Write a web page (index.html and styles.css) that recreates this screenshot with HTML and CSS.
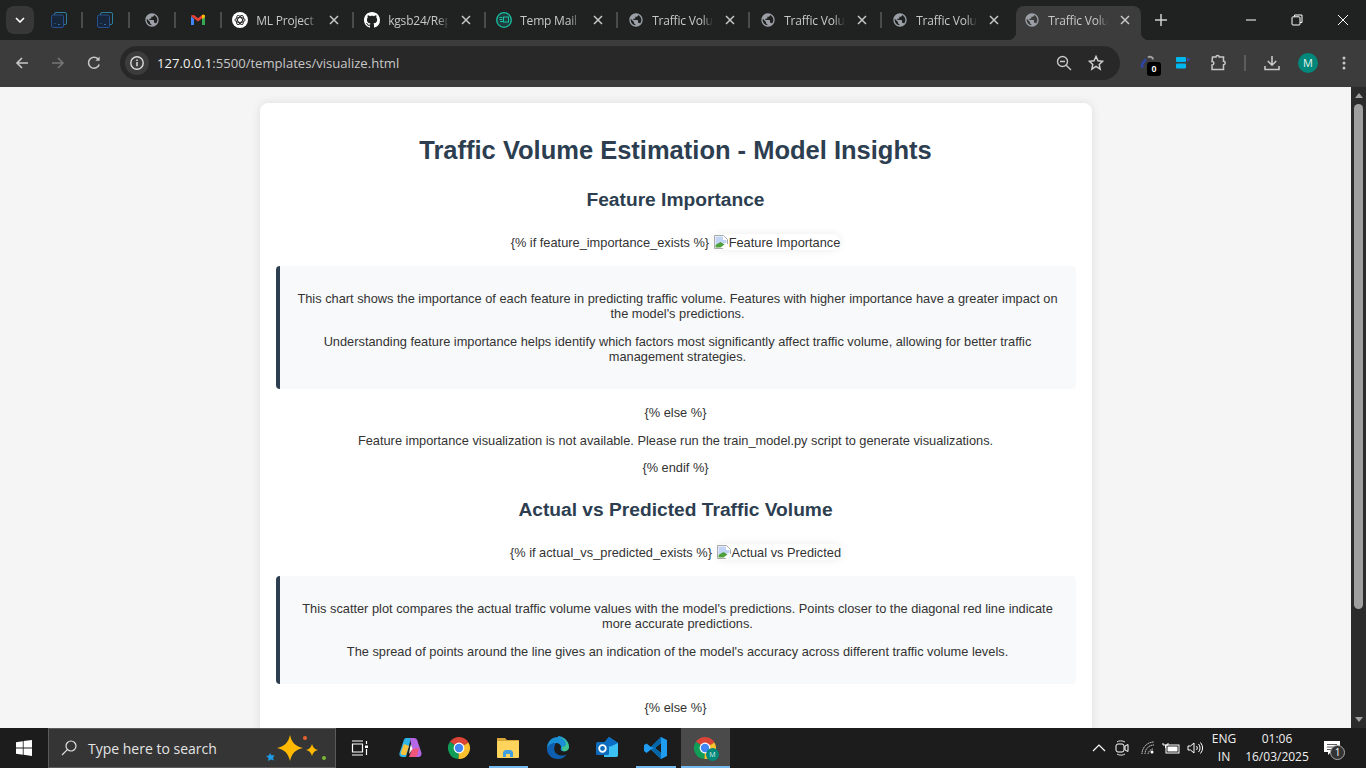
FILE: index.html
```html
<!DOCTYPE html>
<html lang="en">
<head>
  <meta charset="UTF-8" />
  <meta name="viewport" content="width=device-width, initial-scale=1.0" />
  <title>Traffic Volume Estimation - Model Insights</title>
  <link rel="stylesheet" href="styles.css">
</head>
<body>
  <svg class="defs" width="0" height="0">
    <symbol id="globe" viewBox="0 0 24 24">
      <path fill="#9aa0a6" d="M12 2C6.48 2 2 6.48 2 12s4.48 10 10 10 10-4.48 10-10S17.52 2 12 2zm-1 17.93c-3.95-.49-7-3.85-7-7.93 0-.62.08-1.21.21-1.79L9 15v1c0 1.1.9 2 2 2v1.93zm6.9-2.54c-.26-.81-1-1.39-1.9-1.39h-1v-3c0-.55-.45-1-1-1H8v-2h2c.55 0 1-.45 1-1V7h2c1.1 0 2-.9 2-2v-.41c2.93 1.19 5 4.06 5 7.41 0 2.08-.8 3.97-2.1 5.39z"/>
    </symbol>
    <symbol id="close" viewBox="0 0 10 10">
      <path d="M1 1l8 8M9 1l-8 8" stroke="#c7c7c7" stroke-width="1.5" fill="none"/>
    </symbol>
    <symbol id="squares" viewBox="0 0 16 16">
      <rect x="3.5" y=".5" width="12" height="12" rx="1.5" fill="none" stroke="#2a7f9e"/>
      <rect x=".5" y="3" width="12" height="12.5" rx="1.5" fill="#17263a" stroke="#27508f"/>
      <path d="M3.5 11l1 1M7 12.500h2" stroke="#2a6f9e" fill="none"/>
    </symbol>
    <symbol id="chrome" viewBox="0 0 24 24">
      <path fill="#db4437" d="M12 12L2.900 5.800A11 11 0 0 1 21.500 6.500z"/>
      <path fill="#0f9d58" d="M12 12L2.900 5.800A11 11 0 0 0 11.500 23z"/>
      <path fill="#fbc02d" d="M12 12L21.500 6.500A11 11 0 0 1 11.500 23z"/>
      <circle cx="12" cy="12" r="5.400" fill="#fff"/>
      <circle cx="12" cy="12" r="4.200" fill="#4285f4"/>
    </symbol>
    <symbol id="broken" viewBox="0 0 16 16">
      <path fill="#fff" stroke="#a9a9a9" d="M1.500 1.500h9l4 4v9h-13z"/>
      <path fill="#c3d5f5" d="M2.500 2.500h7.500v3.500h3.500v3l-11 2z"/>
      <path fill="#4da03a" d="M2.500 13.500V11l5-3 4 2.500-4 3z"/>
      <path fill="#fff" d="M9 15.500L15.500 9v6.500z"/>
    </symbol>
  </svg>

  <header class="tabstrip">
    <button class="tab-search"><svg width="10" height="6" viewBox="0 0 10 6"><path d="M1 1l4 4 4-4" stroke="#fff" stroke-width="1.6" fill="none"/></svg></button>
    <div class="tab small"><svg width="16" height="16"><use href="#squares"/></svg></div>
    <span class="sep"></span>
    <div class="tab small"><svg width="16" height="16"><use href="#squares"/></svg></div>
    <span class="sep"></span>
    <div class="tab small"><svg width="16" height="16"><use href="#globe"/></svg></div>
    <span class="sep"></span>
    <div class="tab small">
      <svg width="16" height="16" viewBox="0 0 16 16">
        <path fill="#4285f4" d="M1 4v9h3V7z"/>
        <path fill="#34a853" d="M12 7v6h3V4z"/>
        <path fill="#ea4335" d="M1 3.500L4 3l4 3.200L12 3l3 .5V4L8 9.500 1 4z"/>
        <path fill="#fbbc04" d="M12 3l1.500-.6L15 3.500V5l-3 2.200z"/>
      </svg>
    </div>
    <span class="sep"></span>
    <div class="tab">
      <svg width="16" height="16" viewBox="0 0 16 16">
        <circle cx="8" cy="8" r="8" fill="#fff"/>
        <g fill="none" stroke="#222" stroke-width=".9">
          <ellipse cx="8" cy="8" rx="5" ry="2.400"/>
          <ellipse cx="8" cy="8" rx="5" ry="2.400" transform="rotate(60 8 8)"/>
          <ellipse cx="8" cy="8" rx="5" ry="2.400" transform="rotate(120 8 8)"/>
        </g>
      </svg>
      <span class="tab-title">ML Project C</span>
      <svg class="tab-close" width="10" height="10"><use href="#close"/></svg>
    </div>
    <span class="sep"></span>
    <div class="tab">
      <svg width="16" height="16" viewBox="0 0 16 16"><path fill="#fff" d="M8 0C3.58 0 0 3.58 0 8c0 3.54 2.29 6.53 5.47 7.59.4.07.55-.17.55-.38 0-.19-.01-.82-.01-1.49-2.01.37-2.53-.49-2.69-.94-.09-.23-.48-.94-.82-1.13-.28-.15-.68-.52-.01-.53.63-.01 1.08.58 1.23.82.72 1.21 1.87.87 2.33.66.07-.52.28-.87.51-1.07-1.78-.2-3.64-.89-3.64-3.95 0-.87.31-1.59.82-2.15-.08-.2-.36-1.02.08-2.12 0 0 .67-.21 2.2.82.64-.18 1.32-.27 2-.27.68 0 1.36.09 2 .27 1.53-1.04 2.2-.82 2.2-.82.44 1.1.16 1.92.08 2.12.51.56.82 1.27.82 2.15 0 3.07-1.87 3.75-3.65 3.95.29.25.54.73.54 1.48 0 1.07-.01 1.93-.01 2.2 0 .21.15.46.55.38A8.013 8.013 0 0016 8c0-4.42-3.58-8-8-8z"/></svg>
      <span class="tab-title">kgsb24/Rep</span>
      <svg class="tab-close" width="10" height="10"><use href="#close"/></svg>
    </div>
    <span class="sep"></span>
    <div class="tab">
      <svg width="16" height="16" viewBox="0 0 16 16">
        <circle cx="8" cy="8" r="7.300" fill="#1f3d3f" stroke="#19c3a3" stroke-width="1.300"/>
        <rect x="7.500" y="5" width="5" height="5" fill="none" stroke="#19c3a3"/>
        <path d="M3.500 5.500h3M3.500 7.500h3M4 9.500h3" stroke="#19c3a3"/>
      </svg>
      <span class="tab-title">Temp Mail -</span>
      <svg class="tab-close" width="10" height="10"><use href="#close"/></svg>
    </div>
    <span class="sep"></span>
    <div class="tab">
      <svg width="16" height="16"><use href="#globe"/></svg>
      <span class="tab-title">Traffic Volur</span>
      <svg class="tab-close" width="10" height="10"><use href="#close"/></svg>
    </div>
    <span class="sep"></span>
    <div class="tab">
      <svg width="16" height="16"><use href="#globe"/></svg>
      <span class="tab-title">Traffic Volur</span>
      <svg class="tab-close" width="10" height="10"><use href="#close"/></svg>
    </div>
    <span class="sep"></span>
    <div class="tab">
      <svg width="16" height="16"><use href="#globe"/></svg>
      <span class="tab-title">Traffic Volur</span>
      <svg class="tab-close" width="10" height="10"><use href="#close"/></svg>
    </div>
    <div class="tab active">
      <svg width="16" height="16"><use href="#globe"/></svg>
      <span class="tab-title">Traffic Volur</span>
      <svg class="tab-close" width="10" height="10"><use href="#close"/></svg>
    </div>
    <svg class="new-tab" width="12" height="12" viewBox="0 0 12 12"><path d="M6 0v12M0 6h12" stroke="#d0d0d0" stroke-width="1.5"/></svg>
    <div class="win-controls">
      <svg width="12" height="12" viewBox="0 0 12 12"><path d="M1 6h10" stroke="#fff"/></svg>
      <svg width="12" height="12" viewBox="0 0 12 12"><path d="M3.500 2.500V1h7.500v7.500H9" fill="none" stroke="#fff"/><rect x="1" y="2.800" width="8" height="8.200" rx="1" fill="none" stroke="#fff"/></svg>
      <svg width="12" height="12" viewBox="0 0 12 12"><path d="M1 1l10 10M11 1L1 11" stroke="#fff"/></svg>
    </div>
  </header>

  <nav class="toolbar">
    <svg class="nav-btn" width="16" height="16" viewBox="0 0 16 16"><path d="M14 8H3M8 3L3 8l5 5" fill="none" stroke="#c7c7c7" stroke-width="1.6"/></svg>
    <svg class="nav-btn" width="16" height="16" viewBox="0 0 16 16"><path d="M2 8h11M8 3l5 5-5 5" fill="none" stroke="#757575" stroke-width="1.6"/></svg>
    <svg class="nav-btn" width="16" height="16" viewBox="0 0 16 16"><path d="M13.200 9.500A5.500 5.500 0 1 1 12 4" fill="none" stroke="#c7c7c7" stroke-width="1.6"/><path d="M13.600 1.600v4.200H9.400z" fill="#c7c7c7"/></svg>
    <div class="omnibox">
      <span class="site-info"><svg width="16" height="16" viewBox="0 0 16 16"><circle cx="8" cy="8" r="6.200" fill="none" stroke="#dcdcdc" stroke-width="1.400"/><path d="M8 7v4.200M8 4.400v1.500" stroke="#dcdcdc" stroke-width="1.5"/></svg></span>
      <span class="url"><b>127.0.0.1</b>:5500/templates/visualize.html</span>
      <svg class="omni-zoom" width="16" height="16" viewBox="0 0 16 16"><circle cx="6.500" cy="6.500" r="5" fill="none" stroke="#c7c7c7" stroke-width="1.400"/><path d="M10.200 10.200L15 15M4 6.500h5" stroke="#c7c7c7" stroke-width="1.400"/></svg>
      <svg class="omni-star" width="16" height="16" viewBox="0 0 16 16"><path d="M8 1.400l2 4.400 4.700.5-3.500 3.200 1 4.700L8 11.400l-4.200 2.800 1-4.700L1.300 6.300 6 5.800z" fill="none" stroke="#d0d0d0" stroke-width="1.400"/></svg>
    </div>
    <div class="ext-btn ext-link">
      <svg width="18" height="18" viewBox="0 0 18 18"><path d="M4 13.500a3 3 0 0 1-.5-4L7 5" fill="none" stroke="#2b46a8" stroke-width="2.400"/><path d="M9 3.500a3 3 0 0 1 5 2" fill="none" stroke="#a0a0a0" stroke-width="2"/></svg>
      <span class="ext-badge">0</span>
    </div>
    <div class="ext-btn ext-blue">
      <svg width="15" height="12" viewBox="0 0 15 12"><rect x="0" y="0" width="10" height="5" rx="1" fill="#00b7ee"/><rect x="0" y="6.500" width="10" height="5" rx="1" fill="#00b7ee"/><path d="M11 .5l3.500 2L11 4.500z" fill="#3948b0"/></svg>
    </div>
    <div class="ext-btn ext-puzzle">
      <svg width="18" height="18" viewBox="0 0 18 18"><path d="M3.500 3H7a1.600 1.600 0 0 1 3.200 0h4.300v4.300a1.500 1.500 0 0 1 0 3.400V15.500H3V11a1.800 1.800 0 0 0 0-3.600z" fill="none" stroke="#c7c7c7" stroke-width="1.500"/></svg>
    </div>
    <span class="tool-sep"></span>
    <div class="ext-btn ext-download">
      <svg width="16" height="16" viewBox="0 0 16 16"><path d="M8 1v9M3.800 6L8 10.200 12.200 6M1 11v3.500h14V11" fill="none" stroke="#c7c7c7" stroke-width="1.600"/></svg>
    </div>
    <span class="avatar">M</span>
    <svg class="menu-dots" width="4" height="14" viewBox="0 0 4 14"><circle cx="2" cy="2" r="1.500" fill="#c7c7c7"/><circle cx="2" cy="7" r="1.500" fill="#c7c7c7"/><circle cx="2" cy="12" r="1.500" fill="#c7c7c7"/></svg>
  </nav>

  <div class="viewport">
    <main class="page">
      <div class="container">
        <h1>Traffic Volume Estimation - Model Insights</h1>

        <h2>Feature Importance</h2>
        <p>{% if feature_importance_exists %}
          <span class="broken-img"><svg width="16" height="16"><use href="#broken"/></svg>Feature Importance</span>
        </p>
        <div class="explanation">
          <p>This chart shows the importance of each feature in predicting traffic volume. Features with higher importance have a greater impact on the model's predictions.</p>
          <p>Understanding feature importance helps identify which factors most significantly affect traffic volume, allowing for better traffic management strategies.</p>
        </div>
        <p>{% else %}</p>
        <p>Feature importance visualization is not available. Please run the train_model.py script to generate visualizations.</p>
        <p>{% endif %}</p>

        <h2>Actual vs Predicted Traffic Volume</h2>
        <p>{% if actual_vs_predicted_exists %}
          <span class="broken-img"><svg width="16" height="16"><use href="#broken"/></svg>Actual vs Predicted</span>
        </p>
        <div class="explanation">
          <p>This scatter plot compares the actual traffic volume values with the model's predictions. Points closer to the diagonal red line indicate more accurate predictions.</p>
          <p>The spread of points around the line gives an indication of the model's accuracy across different traffic volume levels.</p>
        </div>
        <p>{% else %}</p>
      </div>
    </main>
    <aside class="scrollbar">
      <span class="arrow-up"></span>
      <span class="thumb"></span>
      <span class="arrow-down"></span>
    </aside>
  </div>

  <footer class="taskbar">
    <svg class="start" width="16" height="16" viewBox="0 0 16 16"><path fill="#fff" d="M0 2.200l6.800-1v6.300H0zM7.600 1.100L16 0v7.500H7.600zM0 8.400h6.800v6.400l-6.800-1zM7.600 8.400H16V16l-8.400-1.200z"/></svg>
    <div class="search">
      <svg width="16" height="16" viewBox="0 0 16 16"><circle cx="10" cy="6" r="5" fill="none" stroke="#e0e0e0" stroke-width="1.200"/><path d="M6.300 9.700L1 15" stroke="#e0e0e0" stroke-width="1.200"/></svg>
      <span>Type here to search</span>
      <svg class="sparkles" width="62" height="28" viewBox="0 0 62 28">
        <path fill="#ffb900" d="M25 1c2 8 5 11 13 13-8 2-11 5-13 13-2-8-5-11-13-13 8-2 11-5 13-13z"/>
        <path fill="#ffb900" d="M47 10c1 3.500 2.500 5 6 6-3.500 1-5 2.500-6 6-1-3.500-2.500-5-6-6 3.500-1 5-2.500 6-6z"/>
        <path fill="#1e9be8" d="M5 19l1.500 2.500 3-.5-1.500 3 1 2.500-3-1-3 1.500.5-3L1 22l3-.5z"/>
        <circle cx="40" cy="4" r="2" fill="#e8622a"/>
        <circle cx="59" cy="24" r="2" fill="#7ab733"/>
      </svg>
    </div>
    <svg class="task-view" width="18" height="16" viewBox="0 0 18 16"><path d="M1 1h11M1 15h11M1.500 4h10v8h-10zM15.500 1v3M15.500 9v6" fill="none" stroke="#fff" stroke-width="1.200"/><rect x="14" y="5.500" width="3" height="2.500" fill="#fff"/></svg>
    <div class="task-icons">
      <span class="task-item">
        <svg width="24" height="24" viewBox="0 0 24 24">
          <path fill="#2fb4e8" d="M8 2h5L8 21H5C2 21 1 19 1.500 17l4-12C6 3 7 2 8 2z"/>
          <path fill="#f9c23c" d="M3 16l3-8 5 2-3 9H5c-2 0-2.500-1.500-2-3z"/>
          <path fill="#b667e8" d="M12 2h4c2 0 3 1 3.500 3l4 12c.4 2-1 4-3 4h-5z"/>
          <path fill="#f0567a" d="M7 21h9c2 0 3-1 3.500-3L21 12l-7 1-3 8z"/>
          <path fill="#fff" d="M13 8l1.500 5-3.500 5 1-6z"/>
        </svg>
      </span>
      <span class="task-item"><svg width="24" height="24"><use href="#chrome"/></svg></span>
      <span class="task-item running">
        <svg width="24" height="22" viewBox="0 0 24 22">
          <path fill="#d9a63a" d="M1 1h8l2 2h12v4H1z"/>
          <rect x="1" y="4" width="22" height="17" rx="1" fill="#ffd45c"/>
          <path fill="#3f9fe0" d="M7 20v-5l2-2h6l2 2v5h-3v-3h-4v3z"/>
        </svg>
      </span>
      <span class="task-item">
        <svg width="24" height="24" viewBox="0 0 24 24">
          <path fill="#1b8fd6" d="M12 1C5 1 1 6 1 13c2-4 5-6 9-6 3 0 5 2 5 4 0 2-1 3 1 4 3 1 7-1 7-4 0-6-5-11-11-11z"/>
          <path fill="#3ec48c" d="M23 11c0-5-5-10-11-10 5 1 8 4 8 7 0 2-2 3-4 3 0 2 0 3 1 4 3 1 6-1 6-4z"/>
          <path fill="#0f5fb0" d="M1 13c0 6 5 10 11 10 4 0 7-2 9-5-3 2-7 2-10 0-3-2-4-6-1-11-4 0-8 2-9 6z"/>
        </svg>
      </span>
      <span class="task-item">
        <svg width="24" height="24" viewBox="0 0 24 24">
          <path fill="#28a8ea" d="M14 1l9 6v12a2 2 0 0 1-2 2H9V7z"/>
          <path fill="#0a6cc4" d="M14 1l9 6-7 4-7-4z"/>
          <path fill="#50d9ff" d="M9 13l14-6v12a2 2 0 0 1-2 2H9z" opacity=".5"/>
          <rect x="1" y="6" width="13" height="13" rx="1.500" fill="#0f6cbd"/>
          <circle cx="7.500" cy="12.500" r="3.300" fill="none" stroke="#fff" stroke-width="1.800"/>
        </svg>
      </span>
      <span class="task-item running">
        <svg width="24" height="24" viewBox="0 0 24 24">
          <path fill="#1f9cf0" d="M17 1l6 3v16l-6 3-10-9.500-4.500 3.500L0 15V9l2.500-1.500L7 11zM17 7l-6 5 6 5z" fill-rule="evenodd"/>
          <path fill="#0065a9" d="M17 1v6l-6 5-4-1zM7 13l4-1 6 5v6z"/>
        </svg>
      </span>
      <span class="task-item active">
        <svg width="24" height="24"><use href="#chrome"/></svg>
        <span class="profile-dot">M</span>
      </span>
    </div>
    <div class="tray">
      <svg class="t-chev" width="14" height="8" viewBox="0 0 14 8"><path d="M1 7l6-6 6 6" fill="none" stroke="#fff" stroke-width="1.200"/></svg>
      <svg class="t-meet" width="14" height="18" viewBox="0 0 14 18"><path d="M2 3c1-1.500 6-1.500 8 0M2 15c2 1.500 6 1.500 8 0" fill="none" stroke="#ddd"/><rect x="1" y="5" width="8" height="8" rx="2" fill="none" stroke="#fff"/><path d="M10 7l3-1.500v7L10 11z" fill="none" stroke="#fff"/></svg>
      <svg class="t-wifi" width="14" height="14" viewBox="0 0 14 14"><path d="M1 13A12 12 0 0 1 13 1M4 13a9 9 0 0 1 9-9M7 13a6 6 0 0 1 5-5" fill="none" stroke="#ddd" stroke-dasharray="1.500 .6"/><circle cx="11" cy="11" r="1.500" fill="#fff"/></svg>
      <svg class="t-batt" width="18" height="12" viewBox="0 0 18 12"><path d="M1 1v2h5V1M3.500 3v3" stroke="#fff" fill="none"/><rect x="4" y="3" width="13" height="8" fill="none" stroke="#fff"/><rect x="5.500" y="4.500" width="10" height="5" fill="#fff"/></svg>
      <svg class="t-vol" width="17" height="14" viewBox="0 0 17 14"><path d="M1 5v4h2.500L7 12V2L3.500 5z" fill="none" stroke="#fff"/><path d="M9.500 5a3 3 0 0 1 0 4M11.500 3a6 6 0 0 1 0 8M13.500 1.500a9 9 0 0 1 0 11" fill="none" stroke="#fff"/></svg>
      <span class="lang">ENG<br>IN</span>
      <span class="clock">01:06<br>16/03/2025</span>
      <span class="notify">
        <svg width="16" height="14" viewBox="0 0 16 14"><path fill="#fff" d="M0 0h16v11H7l-3 3v-3H0z"/><path d="M3 3.500h10M3 6h10M3 8.500h6" stroke="#333" stroke-width=".8"/></svg>
        <span class="notify-count">1</span>
      </span>
    </div>
  </footer>
</body>
</html>
```

FILE: styles.css
```css
* {
  box-sizing: border-box;
}

html, body {
  margin: 0;
  height: 768px;
  overflow: hidden;
}

body {
  display: flex;
  flex-direction: column;
  background: #202222;
  font-family: "Liberation Sans", Arial, sans-serif;
}

.defs {
  position: absolute;
}

/* tab strip */
.tabstrip {
  height: 40px;
  flex: none;
  display: flex;
  align-items: center;
  padding-left: 6px;
  background: #202222;
}

.tab-search {
  width: 28px;
  height: 28px;
  margin-right: 3px;
  border: none;
  padding: 0;
  border-radius: 8px;
  background: #373737;
  display: flex;
  align-items: center;
  justify-content: center;
}

.tab {
  width: 130px;
  height: 34px;
  padding: 0 13px 0 10px;
  display: flex;
  align-items: center;
  flex: none;
  font: 12px "Open Sans", sans-serif;
  letter-spacing: -0.2px;
  color: #c7c7c7;
}

.tab.small {
  width: 44.3px;
  padding: 0;
  justify-content: center;
}

.tab-title {
  flex: 1;
  margin-left: 8px;
  min-width: 0;
  white-space: nowrap;
  overflow: hidden;
  -webkit-mask-image: linear-gradient(to right, #000 82%, transparent 100%);
  mask-image: linear-gradient(to right, #000 82%, transparent 100%);
}

.tab-close {
  margin-left: 12px;
  flex: none;
}

.sep {
  width: 2px;
  height: 16px;
  flex: none;
  background: #4a4b4b;
}

.tab.active {
  position: relative;
  width: 125px;
  height: 34px;
  align-self: flex-end;
  margin-left: 4px;
  padding: 0 11px 6px 8px;
  border-radius: 8px 8px 0 0;
  background: #3c3c3c;
}

.tab.active::before,
.tab.active::after {
  content: "";
  position: absolute;
  bottom: 0;
  width: 8px;
  height: 8px;
}

.tab.active::before {
  left: -8px;
  background: radial-gradient(circle at 0 0, transparent 8px, #3c3c3c 8.5px);
}

.tab.active::after {
  right: -8px;
  background: radial-gradient(circle at 100% 0, transparent 8px, #3c3c3c 8.5px);
}

.new-tab {
  margin-left: 14px;
  flex: none;
}

.win-controls {
  margin-left: auto;
  display: flex;
  gap: 34px;
  padding-right: 17px;
}

/* toolbar */
.toolbar {
  height: 47px;
  flex: none;
  display: flex;
  align-items: center;
  padding: 0 0 1px 14px;
  background: #3c3c3c;
}

.nav-btn {
  margin-right: 20px;
  flex: none;
}

.omnibox {
  width: 1000px;
  height: 34px;
  margin-left: -2px;
  display: flex;
  align-items: center;
  flex: none;
  padding: 0 16px 0 5px;
  border-radius: 17px;
  background: #282828;
}

.site-info {
  width: 24px;
  height: 24px;
  border-radius: 50%;
  background: #3c3c3c;
  display: flex;
  align-items: center;
  justify-content: center;
}

.url {
  margin-left: 8px;
  font: 13.1px "Open Sans", sans-serif;
  color: #c7c7c7;
}

.url b {
  font-weight: 400;
  color: #f1f1f1;
}

.omni-zoom {
  margin-left: auto;
}

.omni-star {
  margin-left: 16px;
}

.ext-btn {
  position: relative;
  flex: none;
  width: 20px;
  display: flex;
  justify-content: center;
}

.ext-link {
  margin-left: 18px;
}

.ext-badge {
  position: absolute;
  left: 9px;
  top: 8px;
  width: 14px;
  height: 14px;
  border-radius: 3px;
  background: #000;
  color: #fff;
  font: bold 9px/14px "Liberation Sans", sans-serif;
  text-align: center;
}

.ext-blue {
  margin-left: 15px;
}

.ext-puzzle {
  margin-left: 15px;
}

.tool-sep {
  width: 2px;
  height: 16px;
  margin-left: 16px;
  flex: none;
  background: #5c5c5c;
}

.ext-download {
  margin-left: 16px;
}

.avatar {
  width: 20px;
  height: 20px;
  margin-left: 16px;
  flex: none;
  border-radius: 50%;
  background: #00897b;
  color: #e8f5f3;
  font: 11px/20px "Open Sans", sans-serif;
  text-align: center;
}

.menu-dots {
  margin-left: 24px;
  flex: none;
}

/* page */
.viewport {
  height: 641px;
  flex: none;
  display: flex;
  overflow: hidden;
}

.page {
  flex: 1;
  padding-top: 16px;
  background: #f5f5f5;
  color: #333;
  font-size: 12.8px;
  line-height: 15px;
  text-align: center;
}

.container {
  width: 832px;
  margin: 0 auto;
  padding: 32px 16px 16px;
  border-radius: 8px;
  background: #fff;
  box-shadow: 0 0 10px rgba(0, 0, 0, 0.1);
}

.container h1 {
  margin: 0 0 21px;
  font-size: 25.5px;
  line-height: 30px;
  color: #2c3e50;
}

.container h2 {
  margin: 22.5px 0 23.5px;
  font-size: 19.2px;
  line-height: 23px;
  color: #2c3e50;
}

.container p {
  margin: 12.5px 0;
}

.broken-img {
  display: inline-block;
  border-radius: 8px;
  box-shadow: 0 0 10px rgba(0, 0, 0, 0.08);
}

.broken-img svg {
  vertical-align: -3px;
}

.explanation {
  margin: 16px 0;
  padding: 12.75px 16px;
  border-left: 4px solid #2c3e50;
  border-radius: 4px;
  background: #f8f9fa;
}

/* scrollbar */
.scrollbar {
  width: 15px;
  flex: none;
  display: flex;
  flex-direction: column;
  align-items: center;
  background: #2b2b2b;
}

.arrow-up,
.arrow-down {
  width: 0;
  height: 0;
  flex: none;
  border-left: 4.5px solid transparent;
  border-right: 4.5px solid transparent;
}

.arrow-up {
  margin-top: 6px;
  border-bottom: 5px solid #9f9f9f;
}

.arrow-down {
  margin-top: auto;
  margin-bottom: 6px;
  border-top: 5px solid #9f9f9f;
}

.thumb {
  width: 9px;
  height: 505px;
  margin-top: 6px;
  border-radius: 5px;
  background: #9f9f9f;
}

/* taskbar */
.taskbar {
  height: 40px;
  flex: none;
  display: flex;
  align-items: center;
  background: #1c1c1c;
  color: #fff;
}

.start {
  margin-left: 16px;
  flex: none;
}

.search {
  width: 288px;
  height: 40px;
  margin-left: 16px;
  padding: 0 8px 0 12px;
  flex: none;
  display: flex;
  align-items: center;
  border: 1px solid #5b5b5b;
  background: #353535;
  font: 14px "Open Sans", sans-serif;
  color: #e4e4e4;
}

.search span {
  margin-left: 11px;
}

.sparkles {
  margin-left: auto;
}

.task-view {
  margin-left: 15px;
  flex: none;
}

.task-icons {
  display: flex;
  margin-left: 16px;
  flex: none;
}

.task-item {
  position: relative;
  width: 49.3px;
  height: 40px;
  display: flex;
  align-items: center;
  justify-content: center;
  flex: none;
}

.task-item.running::after {
  content: "";
  position: absolute;
  left: 5px;
  right: 5px;
  bottom: 0;
  height: 2px;
  background: #76b9ed;
}

.task-item.active {
  background: #4a4a4a;
}

.task-item.active::after {
  content: "";
  position: absolute;
  left: 0;
  right: 0;
  bottom: 0;
  height: 2px;
  background: #76b9ed;
}

.profile-dot {
  position: absolute;
  left: 25px;
  top: 20px;
  width: 13px;
  height: 13px;
  border-radius: 50%;
  background: #00897b;
  color: #dfeeee;
  font: 7px/13px "Open Sans", sans-serif;
  text-align: center;
}

.tray {
  margin-left: auto;
  display: flex;
  align-items: center;
  flex: none;
  height: 40px;
  padding-right: 4px;
  font: 12px/18px "Open Sans", sans-serif;
  text-align: center;
  color: #f0f0f0;
}

.t-chev,
.t-meet,
.t-wifi,
.t-batt,
.t-vol {
  flex: none;
}

.t-meet {
  margin-left: 9px;
}

.t-wifi {
  margin-left: 12px;
}

.t-batt {
  margin-left: 7px;
}

.t-vol {
  margin-left: 7px;
}

.lang {
  width: 30px;
  margin-left: 5px;
}

.clock {
  width: 70px;
  margin-left: 3px;
}

.notify {
  position: relative;
  width: 30px;
  height: 40px;
  margin-left: 5px;
  margin-right: 15px;
  display: flex;
  align-items: center;
  justify-content: center;
}

.notify-count {
  position: absolute;
  left: 13px;
  top: 17px;
  width: 15px;
  height: 15px;
  border: 1px solid #aaa;
  border-radius: 50%;
  background: #333;
  font: 10px/13px "Open Sans", sans-serif;
  color: #fff;
}
```
